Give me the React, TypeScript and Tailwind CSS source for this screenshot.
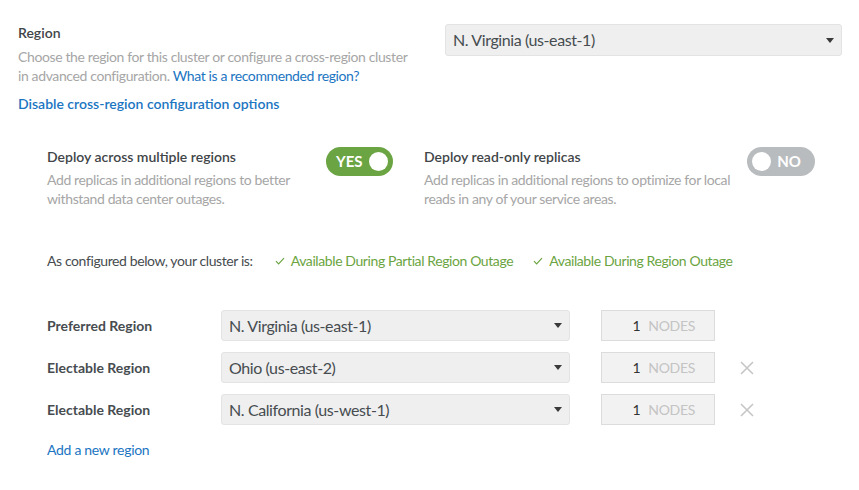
function Caret() {
  return (
    <svg width="8" height="5" viewBox="0 0 8 5" className="shrink-0">
      <path d="M0 0h8L4 5z" fill="#3a3a3a" />
    </svg>
  )
}

function Select({ value, className }: { value: string; className: string }) {
  return (
    <div
      className={`flex items-center justify-between rounded-[3px] border border-[#e3e3e3] bg-[#efefef] pl-[7px] pr-[7px] text-[16px] tracking-[-0.4px] text-[#464c4f] ${className}`}
    >
      <span>{value}</span>
      <Caret />
    </div>
  )
}

function Toggle({ on }: { on: boolean }) {
  return on ? (
    <div className="flex h-[29px] w-[67px] shrink-0 items-center justify-between rounded-full bg-[#6ba442] pl-[10px] pr-[5px]">
      <span className="text-[15px] font-bold text-white">YES</span>
      <span className="h-[19px] w-[19px] rounded-full bg-white" />
    </div>
  ) : (
    <div className="flex h-[29px] w-[68px] shrink-0 items-center justify-between rounded-full bg-[#b9bcbe] pl-[5px] pr-[14px]">
      <span className="h-[19px] w-[19px] rounded-full bg-white" />
      <span className="text-[15px] font-bold text-white">NO</span>
    </div>
  )
}

function Check() {
  return (
    <svg width="10" height="8" viewBox="0 0 10 8" className="mr-[6px]">
      <path d="M1 4.2l2.6 2.6L9 1.2" fill="none" stroke="#6ba442" strokeWidth="1.2" />
    </svg>
  )
}

function Remove() {
  return (
    <svg width="14" height="14" viewBox="0 0 14 14" className="ml-[25px]">
      <path d="M1 1l12 12M13 1L1 13" stroke="#c6c6c6" strokeWidth="1.6" />
    </svg>
  )
}

const rows = [
  { label: 'Preferred Region', region: 'N. Virginia (us-east-1)', removable: false },
  { label: 'Electable Region', region: 'Ohio (us-east-2)', removable: true },
  { label: 'Electable Region', region: 'N. California (us-west-1)', removable: true },
]

export default function App() {
  return (
    <div className="h-[490px] w-[859px] bg-white pl-[18px] pt-[23px] font-['Lato','Liberation_Sans',sans-serif] text-[14px] text-[#464c4f]">
      <div className="flex">
        <div className="w-[427px]">
          <div className="font-semibold leading-[20px] text-[#3f4548]">Region</div>
          <p className="mt-[4px] w-[400px] leading-[19px] tracking-[-0.38px] text-[#a6a6a6]">
            Choose the region for this cluster or configure a cross-region cluster in advanced configuration.{' '}
            <a className="text-[#1b75c2]">What is a recommended region?</a>
          </p>
          <a className="mt-[9px] block font-semibold leading-[20px] text-[#1b75c2]">
            Disable cross-region configuration options
          </a>
        </div>
        <Select value="N. Virginia (us-east-1)" className="mt-[1px] h-[32px] w-[397px]" />
      </div>

      <div className="ml-[29px] mt-[33px] flex">
        <div className="flex w-[346px] justify-between">
          <div>
            <div className="font-semibold leading-[20px] text-[#3f4548]">Deploy across multiple regions</div>
            <p className="mt-[3px] w-[250px] leading-[19px] tracking-[-0.38px] text-[#a6a6a6]">
              Add replicas in additional regions to better withstand data center outages.
            </p>
          </div>
          <Toggle on />
        </div>
        <div className="ml-[31px] flex w-[391px] justify-between">
          <div>
            <div className="font-semibold leading-[20px] text-[#3f4548]">Deploy read-only replicas</div>
            <p className="mt-[3px] w-[320px] leading-[19px] tracking-[-0.38px] text-[#a6a6a6]">
              Add replicas in additional regions to optimize for local reads in any of your service areas.
            </p>
          </div>
          <Toggle on={false} />
        </div>
      </div>

      <div className="ml-[29px] mt-[43px] flex items-center leading-[20px] tracking-[-0.4px]">
        <span>As configured below, your cluster is:</span>
        <span className="ml-[22px] flex items-center text-[#6ba442]">
          <Check />
          Available During Partial Region Outage
        </span>
        <span className="ml-[20px] flex items-center text-[#6ba442]">
          <Check />
          Available During Region Outage
        </span>
      </div>

      <div className="ml-[29px] mt-[39px] flex flex-col gap-[11px]">
        {rows.map((r, i) => (
          <div key={i} className="flex h-[31px] items-center">
            <div className="w-[174px] font-bold text-[#464c4f]">{r.label}</div>
            <Select value={r.region} className="h-[31px] w-[349px]" />
            <div className="ml-[31px] flex h-[31px] w-[114px] items-center justify-end border border-[#dcdcdc] bg-[#f2f2f2] pr-[19px] text-[14px] tracking-[-0.3px]">
              <span className="text-[#333]">1</span>
              <span className="ml-[8px] text-[#c4c4c4]">NODES</span>
            </div>
            {r.removable && <Remove />}
          </div>
        ))}
      </div>

      <a className="ml-[29px] mt-[15px] block leading-[20px] tracking-[-0.3px] text-[#1b75c2]">Add a new region</a>
    </div>
  )
}
